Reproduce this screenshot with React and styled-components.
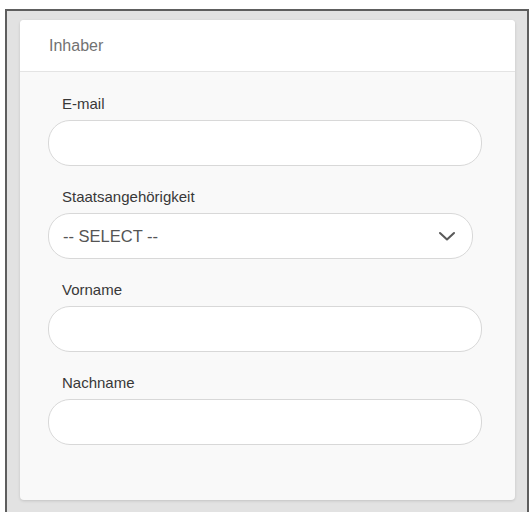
import styled, { createGlobalStyle } from 'styled-components'

const GlobalStyle = createGlobalStyle`
  body {
    margin: 0;
    background: #ffffff;
    font-family: 'Liberation Sans', Arial, sans-serif;
  }
`

const Frame = styled.div`
  box-sizing: border-box;
  height: 503px;
  margin: 9px 3px 0 5px;
  padding: 9px 12px 0 13px;
  background: #e2e2e2;
  border: 2px solid #5e5e5e;
  border-bottom: none;
`

const Card = styled.section`
  height: 480px;
  background: #f9f9f9;
  border-radius: 4px;
  box-shadow: 0 1px 3px rgba(0, 0, 0, 0.14);
  overflow: hidden;
`

const CardHeader = styled.header`
  box-sizing: border-box;
  height: 52px;
  display: flex;
  align-items: center;
  padding-left: 29px;
  background: #ffffff;
  border-bottom: 1px solid #e4e4e4;
  font-size: 16px;
  color: #727272;
`

const Form = styled.form`
  display: flex;
  flex-direction: column;
  gap: 23px;
  padding: 24px 0 0 28px;
`

const Field = styled.div`
  display: flex;
  flex-direction: column;
  gap: 8px;
`

const Label = styled.label`
  padding-left: 14px;
  font-size: 15px;
  line-height: 16px;
  color: #383838;
`

const TextInput = styled.input`
  box-sizing: border-box;
  width: 434px;
  height: 46px;
  padding: 0 14px;
  border: 1px solid #d8d8d8;
  border-radius: 22px;
  background: #ffffff;
  font: inherit;
  outline: none;
`

const SelectBox = styled.div`
  box-sizing: border-box;
  width: 425px;
  height: 46px;
  display: flex;
  align-items: center;
  justify-content: space-between;
  padding: 0 15px 0 14px;
  border: 1px solid #d8d8d8;
  border-radius: 22px;
  background: #ffffff;
  font-size: 16.5px;
  color: #555555;
  cursor: pointer;
`

function Chevron() {
  return (
    <svg width="20" height="12" viewBox="0 0 20 12" fill="none">
      <path d="M3 3 L10 9.5 L17 3" stroke="#5a5a5a" strokeWidth="2.1" strokeLinecap="round" strokeLinejoin="round" />
    </svg>
  )
}

function App() {
  return (
    <>
      <GlobalStyle />
      <Frame>
        <Card>
          <CardHeader>Inhaber</CardHeader>
          <Form onSubmit={e => e.preventDefault()}>
            <Field>
              <Label htmlFor="email">E-mail</Label>
              <TextInput id="email" type="email" />
            </Field>
            <Field>
              <Label>Staatsangehörigkeit</Label>
              <SelectBox>
                <span>-- SELECT --</span>
                <Chevron />
              </SelectBox>
            </Field>
            <Field>
              <Label htmlFor="vorname">Vorname</Label>
              <TextInput id="vorname" type="text" />
            </Field>
            <Field>
              <Label htmlFor="nachname">Nachname</Label>
              <TextInput id="nachname" type="text" />
            </Field>
          </Form>
        </Card>
      </Frame>
    </>
  )
}

export default App
